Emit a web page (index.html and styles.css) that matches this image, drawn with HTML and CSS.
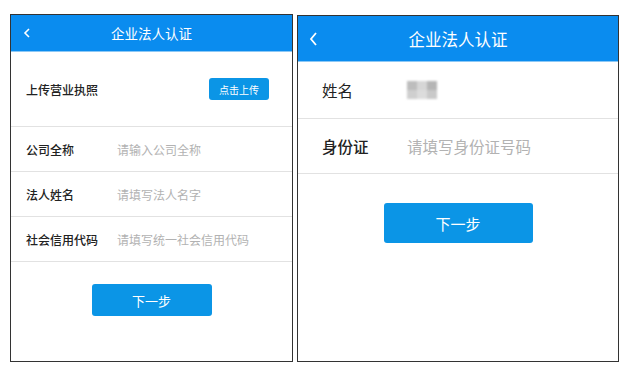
FILE: index.html
```html
<!DOCTYPE html>
<html lang="zh-CN">
<head>
  <meta charset="UTF-8">
  <title>企业法人认证</title>
  <meta name="viewport" content="width=device-width, initial-scale=1.0">
  <link rel="stylesheet" href="styles.css">
</head>
<body>
  <div class="screens">
    <div class="panel panel-company">
      <div class="header">
        <svg class="back" width="8" height="10" viewBox="0 0 8 10"><polyline points="6,1 2,5 6,9" fill="none" stroke="#fff" stroke-width="1.6"/></svg>
        <span class="title">企业法人认证</span>
      </div>
      <div class="row row-upload">
        <span class="label">上传营业执照</span>
        <button class="upload-btn">点击上传</button>
      </div>
      <div class="row">
        <span class="label">公司全称</span>
        <input class="field" placeholder="请输入公司全称">
      </div>
      <div class="row">
        <span class="label">法人姓名</span>
        <input class="field" placeholder="请填写法人名字">
      </div>
      <div class="row">
        <span class="label">社会信用代码</span>
        <input class="field" placeholder="请填写统一社会信用代码">
      </div>
      <button class="next-btn">下一步</button>
    </div>

    <div class="panel panel-person">
      <div class="header">
        <svg class="back" width="9" height="14" viewBox="0 0 9 14"><polyline points="7,1 2,7 7,13" fill="none" stroke="#fff" stroke-width="1.8"/></svg>
        <span class="title">企业法人认证</span>
      </div>
      <div class="row row-name">
        <span class="label label-plain">姓名</span>
        <div class="blurred">
          <i></i><i></i><i></i><i></i><i></i><i></i>
        </div>
      </div>
      <div class="row">
        <span class="label">身份证</span>
        <input class="field" placeholder="请填写身份证号码">
      </div>
      <button class="next-btn">下一步</button>
    </div>
  </div>
</body>
</html>
```

FILE: styles.css
```css
body {
  margin: 0;
  background: #fff;
  font-family: "Noto Sans CJK SC", "Noto Sans", sans-serif;
  color: #222;
}
.screens {
  display: flex;
  align-items: flex-start;
  gap: 4px;
  padding: 14px 0 0 10px;
}
.panel {
  box-sizing: border-box;
  border: 1px solid #333;
  background: #fff;
  display: flex;
  flex-direction: column;
}
.header {
  display: grid;
  grid-template-columns: 1fr auto 1fr;
  align-items: center;
  box-sizing: border-box;
  background: #0a8cef;
  border-bottom: 1px solid #8cc8f5;
  color: #fff;
}
.title {
  grid-column: 2;
}
.back {
  grid-column: 1;
  grid-row: 1;
  display: block;
}
.row {
  display: flex;
  align-items: center;
  box-sizing: border-box;
  border-bottom: 1px solid #e2e2e2;
}
.label {
  flex: none;
  font-weight: 500;
}
.field {
  flex: 1;
  min-width: 0;
  border: none;
  outline: none;
  padding: 0;
  background: transparent;
  font: inherit;
  font-weight: 400;
  color: #222;
}
.field::placeholder {
  color: #b2b2b2;
}
button {
  font-family: inherit;
  border: none;
  color: #fff;
  background: #0b95e6;
  cursor: pointer;
}
.next-btn {
  align-self: center;
}

/* 企业认证 */
.panel-company {
  width: 283px;
  height: 348px;
}
.panel-company .header {
  height: 37px;
  font-size: 13.5px;
}
.panel-company .back {
  margin-left: 12px;
}
.panel-company .row {
  height: 45px;
  padding: 0 23px 0 15px;
  font-size: 12px;
}
.panel-company .row-upload {
  height: 75px;
  justify-content: space-between;
}
.panel-company .label {
  width: 91px;
}
.upload-btn {
  width: 60px;
  height: 22px;
  padding: 0;
  border-radius: 3px;
  font-size: 10px;
}
.panel-company .next-btn {
  margin-top: 22px;
  width: 120px;
  height: 32px;
  border-radius: 3px;
  font-size: 13px;
}

/* 个人认证 */
.panel-person {
  width: 322px;
  height: 347px;
  margin-top: 1px;
}
.panel-person .header {
  height: 46px;
  font-size: 16.5px;
}
.panel-person .back {
  margin-left: 11px;
}
.panel-person .row {
  height: 55px;
  padding: 0 24px;
  font-size: 15.5px;
}
.panel-person .row-name {
  height: 57px;
}
.panel-person .label {
  width: 85px;
}
.panel-person .label-plain {
  font-weight: 400;
}
.blurred {
  display: grid;
  grid-template-columns: repeat(3, 10px);
  grid-template-rows: repeat(2, 9px);
  filter: blur(0.8px);
}
.blurred i:nth-child(1) { background: #bdbdbd; }
.blurred i:nth-child(2) { background: #d6d6d6; }
.blurred i:nth-child(3) { background: #b5b5b5; }
.blurred i:nth-child(4) { background: #cfcfcf; }
.blurred i:nth-child(5) { background: #dcdcdc; }
.blurred i:nth-child(6) { background: #c9c9c9; }
.panel-person .next-btn {
  margin-top: 29px;
  width: 149px;
  height: 40px;
  border-radius: 3px;
  font-size: 15px;
}
```
